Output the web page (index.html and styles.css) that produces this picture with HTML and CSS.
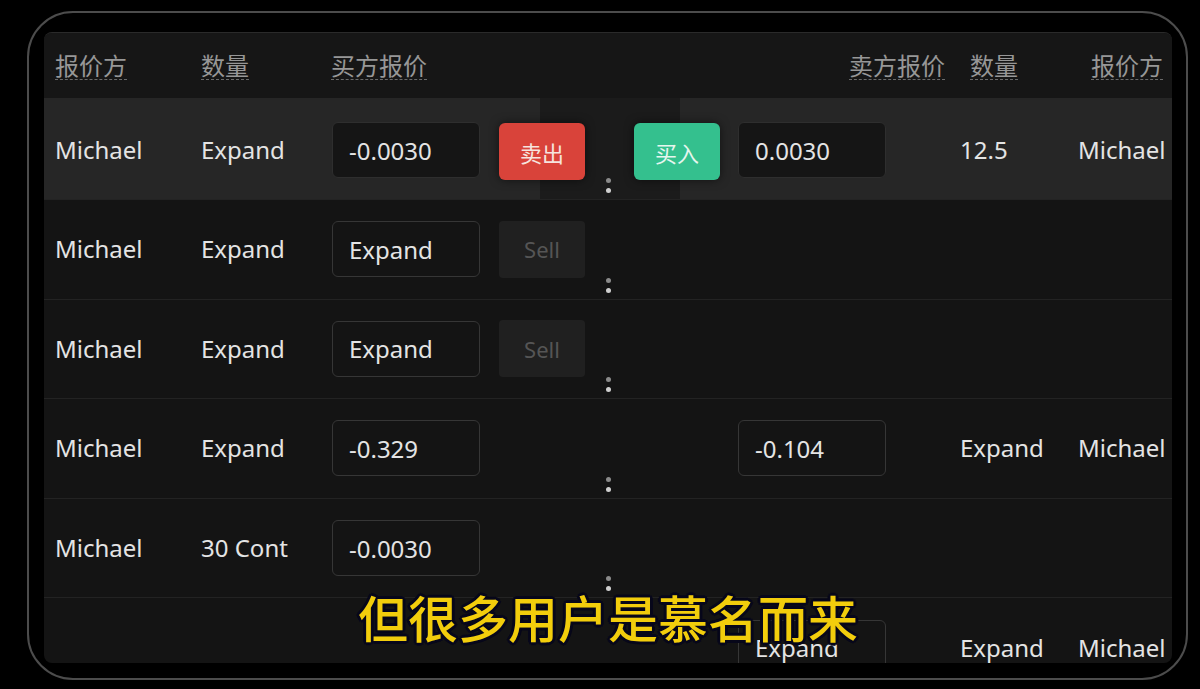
FILE: index.html
```html
<!DOCTYPE html>
<html lang="zh">
<head>
<meta charset="utf-8">
<title>报价</title>
<link rel="stylesheet" href="styles.css">
</head>
<body>
<div class="bezel">
  <div class="panel">
    <div class="head">
      <span class="h h-name">报价方</span>
      <span class="h h-qty">数量</span>
      <span class="h h-bid">买方报价</span>
      <span class="h h-ask">卖方报价</span>
      <span class="h h-qty2">数量</span>
      <span class="h h-name2">报价方</span>
    </div>

    <div class="row row-active">
      <span class="cell">Michael</span>
      <span class="cell">Expand</span>
      <span class="input input-dark">-0.0030</span>
      <span></span>
      <span class="btn btn-sell">卖出</span>
      <span class="dots"><i></i><i></i></span>
      <span class="btn btn-buy">买入</span>
      <span></span>
      <span class="input input-dark">0.0030</span>
      <span></span>
      <span class="cell">12.5</span>
      <span class="cell">Michael</span>
    </div>

    <div class="row">
      <span class="cell">Michael</span>
      <span class="cell">Expand</span>
      <span class="input">Expand</span>
      <span></span>
      <span class="btn btn-off">Sell</span>
      <span class="dots"><i></i><i></i></span>
    </div>

    <div class="row">
      <span class="cell">Michael</span>
      <span class="cell">Expand</span>
      <span class="input">Expand</span>
      <span></span>
      <span class="btn btn-off">Sell</span>
      <span class="dots"><i></i><i></i></span>
    </div>

    <div class="row">
      <span class="cell">Michael</span>
      <span class="cell">Expand</span>
      <span class="input">-0.329</span>
      <span></span>
      <span></span>
      <span class="dots"><i></i><i></i></span>
      <span></span>
      <span></span>
      <span class="input">-0.104</span>
      <span></span>
      <span class="cell">Expand</span>
      <span class="cell">Michael</span>
    </div>

    <div class="row">
      <span class="cell">Michael</span>
      <span class="cell">30 Cont</span>
      <span class="input">-0.0030</span>
      <span></span>
      <span></span>
      <span class="dots"><i></i><i></i></span>
    </div>

    <div class="row">
      <span class="cell"></span>
      <span class="cell"></span>
      <span></span>
      <span></span>
      <span></span>
      <span></span>
      <span></span>
      <span></span>
      <span class="input">Expand</span>
      <span></span>
      <span class="cell">Expand</span>
      <span class="cell">Michael</span>
    </div>

    <div class="subtitle">但很多用户是慕名而来</div>
  </div>
</div>
</body>
</html>
```

FILE: styles.css
```css
* { box-sizing: border-box; }

html, body {
  margin: 0;
  padding: 0;
  background: #000;
}

body {
  width: 1200px;
  height: 689px;
  overflow: hidden;
  font-family: "Noto Sans", "Noto Sans CJK SC", sans-serif;
  color: #e4e4e4;
}

.bezel {
  width: 1161px;
  height: 669px;
  margin: 11px 0 0 27px;
  border: 2px solid #4c4c4c;
  border-radius: 46px;
  padding: 19px 14px 15px 15px;
}

.panel {
  position: relative;
  width: 1128px;
  height: 631px;
  background: #141414;
  border-radius: 8px;
  overflow: hidden;
  border-top: 1px solid #2a2a2a;
}

.head {
  height: 65px;
  display: flex;
  align-items: center;
  padding: 0 9px 0 11px;
  background: #161616;
}

.h {
  font-family: "Noto Sans CJK SC", sans-serif;
  font-size: 24px;
  line-height: 28px;
  color: #979797;
  border-bottom: 1.5px dashed #6a6a6a;
}

.h-name { margin-right: 74px; }
.h-qty { margin-right: 82px; }
.h-ask { margin-left: auto; }
.h-qty2 { margin-left: 25px; }
.h-name2 { margin-left: 73px; }

.row {
  height: 99.6px;
  display: grid;
  grid-template-columns: 146px 131px 148px 19px 86px 49px 86px 18px 148px 74px 118px 1fr;
  align-items: center;
  padding-left: 11px;
  border-top: 1px solid #232323;
  font-size: 24px;
}

.row-active {
  height: 101px;
  border-top: none;
  background: linear-gradient(90deg, #262626 496px, #1b1b1b 496px, #1b1b1b 636px, #262626 636px);
}

.row-active .input { margin-top: 3px; }
.row-active .btn { margin-top: 6px; }
.row-active .cell { margin-top: 2px; }

.cell {
  white-space: nowrap;
  line-height: 30px;
}

.input {
  height: 56px;
  border: 1.5px solid #363636;
  border-radius: 6px;
  padding-left: 16px;
  display: flex;
  align-items: center;
  white-space: nowrap;
  background: #141414;
}

.input-dark {
  background: #151515;
  border-color: #2e2e2e;
}

.btn {
  height: 57px;
  border-radius: 6px;
  display: flex;
  align-items: center;
  justify-content: center;
  font-size: 22px;
}

.btn-sell {
  background: #d9433a;
  color: #f6e4de;
  font-family: "Noto Sans CJK SC", sans-serif;
  box-shadow: 0 0 10px rgba(0, 0, 0, 0.55);
}

.btn-buy {
  background: #34c08e;
  color: #e6f6ee;
  font-family: "Noto Sans CJK SC", sans-serif;
  box-shadow: 0 0 10px rgba(0, 0, 0, 0.55);
}

.btn-off {
  background: #202020;
  color: #555;
  border-radius: 4px;
}

.dots {
  align-self: stretch;
  display: flex;
  flex-direction: column;
  justify-content: flex-end;
  align-items: center;
  gap: 5px;
  padding-bottom: 6px;
  padding-right: 3px;
}

.dots i {
  display: block;
  width: 5px;
  height: 5px;
  border-radius: 50%;
  background: #d0d0d0;
}

.dots i:first-child {
  background: #8a8a8a;
}

.subtitle {
  position: absolute;
  left: 0;
  right: 0;
  top: 548px;
  text-align: center;
  font-family: "Noto Sans CJK SC", sans-serif;
  font-weight: 500;
  font-size: 50px;
  line-height: 70px;
  color: #f2cd0c;
  text-shadow:
    2px 2px 0 #07071a, -2px -2px 0 #07071a, 2px -2px 0 #07071a, -2px 2px 0 #07071a,
    3px 0 0 #07071a, -3px 0 0 #07071a, 0 3px 0 #07071a, 0 -3px 0 #07071a;
}
```
